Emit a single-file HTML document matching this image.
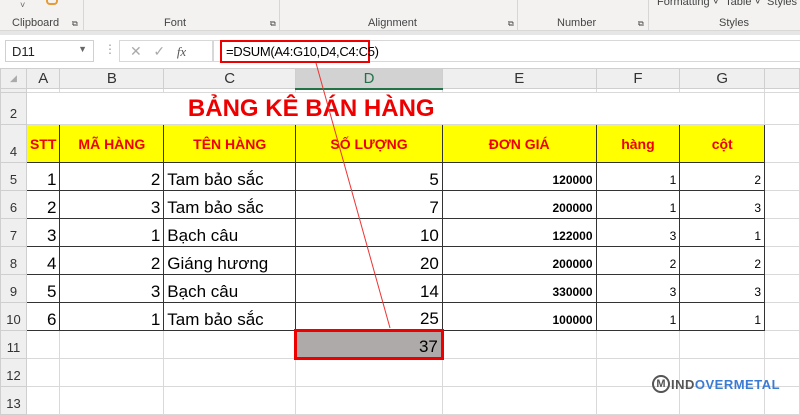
<!DOCTYPE html>
<html><head><meta charset="utf-8"><style>
*{margin:0;padding:0;box-sizing:border-box}
body{width:800px;height:401px;overflow:hidden;background:#fff;font-family:"Liberation Sans",Arial,sans-serif;position:relative}
.ab{position:absolute}
.rib{left:0;top:0;width:800px;height:31px;background:#f3f2f1;border-bottom:1px solid #d8d8d8}
.gl{font-size:11px;color:#444;top:17px}
.sep{width:1px;background:#d6d6d6;top:0;height:30px}
.fb{left:0;top:31px;width:800px;height:37px;background:#fff}
table{position:absolute;left:0;top:68px;border-collapse:collapse;table-layout:fixed}
td{border:1px solid #d9d9d9;font-size:17px;padding:0 3px;white-space:nowrap;overflow:hidden;color:#000;vertical-align:bottom}
td.h{background:#efefef;color:#333;font-size:15px;text-align:center;vertical-align:middle;border-color:#cfcfcf}
td.rh{background:#efefef;color:#333;font-size:13px;text-align:center;border-color:#cfcfcf;vertical-align:bottom;padding-bottom:3px}
td.d{border:1.5px solid #333}
td.y{background:#ffff00;color:#e00;font-weight:bold;font-size:14px;text-align:center;vertical-align:middle;border:1.5px solid #333}
.r{text-align:right}
.b{font-weight:bold;font-size:12px;padding-bottom:3px}
.s{font-size:12px;padding-bottom:3px}
</style></head><body>
<div class="ab rib"></div>
<div class="ab gl" style="left:12px">Clipboard</div>
<div class="ab gl" style="left:72px;font-size:8px;top:19px">⧉</div>
<div class="ab sep" style="left:83px"></div>
<div class="ab gl" style="left:164px">Font</div>
<div class="ab gl" style="left:270px;font-size:8px;top:19px">⧉</div>
<div class="ab sep" style="left:279px"></div>
<div class="ab gl" style="left:368px">Alignment</div>
<div class="ab gl" style="left:508px;font-size:8px;top:19px">⧉</div>
<div class="ab sep" style="left:517px"></div>
<div class="ab gl" style="left:557px">Number</div>
<div class="ab gl" style="left:638px;font-size:8px;top:19px">⧉</div>
<div class="ab sep" style="left:648px"></div>
<div class="ab gl" style="left:719px">Styles</div>
<div class="ab gl" style="left:657px;top:-4px">Formatting ˅ &nbsp;Table ˅ &nbsp;Styles</div>
<div class="ab" style="left:20px;top:0;width:10px;height:5px;color:#666;font-size:9px">˅</div>
<div class="ab" style="left:46px;top:-3px;width:12px;height:8px;border:2px solid #e49b3a;border-top:none;border-radius:0 0 4px 4px"></div>
<div class="ab" style="left:0;top:31px;width:800px;height:4px;background:#e6e6e6"></div>
<div class="ab fb" style="top:35px;height:33px"></div>
<div class="ab" style="left:5px;top:40px;width:89px;height:22px;border:1px solid #d0d0d0;font-size:13px;padding:3px 6px;color:#222">D11<span style="position:absolute;right:6px;top:3px;font-size:9px;color:#666">▼</span></div>
<div class="ab" style="left:104px;top:42px;color:#999;font-size:12px">⋮</div>
<div class="ab" style="left:119px;top:40px;width:94px;height:22px;border:1px solid #d8d8d8;font-size:14px;color:#aaa;padding:2px 10px">✕ &nbsp;&nbsp;✓ &nbsp;&nbsp;<i style="color:#555;font-family:'Liberation Serif';font-size:13px">fx</i></div>
<div class="ab" style="left:213px;top:40px;width:587px;height:22px;border:1px solid #d8d8d8;border-right:none"></div>
<div class="ab" style="left:220px;top:40px;width:150px;height:23px;border:2.5px solid #e00;font-size:13px;padding:2px 4px;color:#000;letter-spacing:-0.3px">=DSUM(A4:G10,D4,C4:C5)</div>
<table>
<colgroup><col style="width:26px"><col style="width:33px"><col style="width:104px"><col style="width:132px"><col style="width:147px"><col style="width:154px"><col style="width:84px"><col style="width:85px"><col style="width:35px"></colgroup>
<tr style="height:20px"><td class="h" style="font-size:9px;color:#aaa">◢</td><td class="h">A</td><td class="h">B</td><td class="h">C</td><td class="h" style="background:#d2d2d2;border-bottom:2px solid #217346;color:#217346">D</td><td class="h">E</td><td class="h">F</td><td class="h">G</td><td class="h"></td></tr>
<tr style="height:4px"><td class="rh" style="font-size:4px;padding:0"></td><td></td><td></td><td></td><td></td><td></td><td></td><td></td><td></td></tr>
<tr style="height:32px"><td class="rh">2</td><td style="border-right:none"></td><td colspan="6" style="text-align:left;padding-left:128px;color:#e00;font-weight:bold;font-size:24px;vertical-align:middle;border-left:none;border-right:none">BẢNG KÊ BÁN HÀNG</td><td></td></tr>
<tr style="height:38px"><td class="rh">4</td><td class="y">STT</td><td class="y">MÃ HÀNG</td><td class="y">TÊN HÀNG</td><td class="y">SỐ LƯỢNG</td><td class="y">ĐƠN GIÁ</td><td class="y">hàng</td><td class="y">cột</td><td></td></tr>
<tr style="height:28px"><td class="rh">5</td><td class="d r">1</td><td class="d r">2</td><td class="d">Tam bảo sắc</td><td class="d r">5</td><td class="d r b">120000</td><td class="d r s">1</td><td class="d r s">2</td><td></td></tr>
<tr style="height:28px"><td class="rh">6</td><td class="d r">2</td><td class="d r">3</td><td class="d">Tam bảo sắc</td><td class="d r">7</td><td class="d r b">200000</td><td class="d r s">1</td><td class="d r s">3</td><td></td></tr>
<tr style="height:28px"><td class="rh">7</td><td class="d r">3</td><td class="d r">1</td><td class="d">Bạch câu</td><td class="d r">10</td><td class="d r b">122000</td><td class="d r s">3</td><td class="d r s">1</td><td></td></tr>
<tr style="height:28px"><td class="rh">8</td><td class="d r">4</td><td class="d r">2</td><td class="d">Giáng hương</td><td class="d r">20</td><td class="d r b">200000</td><td class="d r s">2</td><td class="d r s">2</td><td></td></tr>
<tr style="height:28px"><td class="rh">9</td><td class="d r">5</td><td class="d r">3</td><td class="d">Bạch câu</td><td class="d r">14</td><td class="d r b">330000</td><td class="d r s">3</td><td class="d r s">3</td><td></td></tr>
<tr style="height:28px"><td class="rh">10</td><td class="d r">6</td><td class="d r">1</td><td class="d">Tam bảo sắc</td><td class="d r">25</td><td class="d r b">100000</td><td class="d r s">1</td><td class="d r s">1</td><td></td></tr>
<tr style="height:28px"><td class="rh">11</td><td></td><td></td><td></td><td class="r" style="background:#aeaaaa;border:3px solid #e00">37</td><td></td><td></td><td></td><td></td></tr>
<tr style="height:28px"><td class="rh">12</td><td></td><td></td><td></td><td></td><td></td><td></td><td></td><td></td></tr>
<tr style="height:28px"><td class="rh">13</td><td></td><td></td><td></td><td></td><td></td><td></td><td></td><td></td></tr>
</table>
<svg class="ab" style="left:0;top:0" width="800" height="401"><line x1="316" y1="63" x2="390" y2="328" stroke="#e33" stroke-width="1"/></svg>
<div class="ab" style="left:652px;top:375px;width:18px;height:18px;border:2px solid #555;border-radius:50%;font-size:11px;font-weight:bold;color:#555;text-align:center;line-height:14px">M</div>
<div class="ab" style="left:671px;top:377px;font-size:13px;font-weight:bold;letter-spacing:0.5px"><span style="color:#555">IND</span><span style="color:#3a7bd5">OVERMETAL</span></div>
</body></html>
